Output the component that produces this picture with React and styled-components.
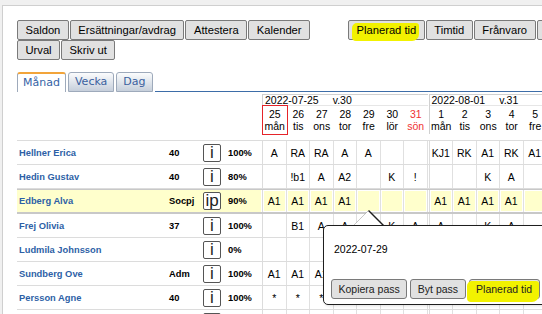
import React from 'react';
import styled, { createGlobalStyle } from 'styled-components';

const GlobalStyle = createGlobalStyle`
  * { box-sizing: border-box; }
  html, body { margin: 0; padding: 0; background: #f0f0f0; overflow: hidden; }
  body { font-family: "Liberation Sans", Arial, sans-serif; color: #000; }
`;

const Frame = styled.div`
  position: relative;
  margin: 5px 0 0 2px;
  width: 640px;
  height: 330px;
  padding: 14px 0 0 14px;
  background: #fff;
  border-top: 1px solid #cfcfcf;
  border-left: 1px solid #cfcfcf;
`;

const ToolRow = styled.div`
  display: flex;
  gap: 1px;
  height: 20px;
  white-space: nowrap;
`;

const RightGroup = styled.div`
  display: flex;
  gap: 1px;
  margin-left: 37px;
`;

const ToolButton = styled.button`
  flex: none;
  height: 20px;
  padding: 0 7.5px;
  border: 1px solid #7a7a7a;
  border-radius: 2px;
  background: #e1e1e1;
  color: #000;
  font-family: "Liberation Sans", Arial, sans-serif;
  font-size: 11.2px;
  line-height: 18px;
  white-space: nowrap;
`;

const Marker = styled.span`
  position: relative;
  z-index: 0;
  &::before {
    content: '';
    position: absolute;
    z-index: -1;
    inset: ${(p) => p.$inset};
    background: #f2f200;
    border-radius: 5px 3px 7px 4px;
  }
`;

const TabBar = styled.div`
  display: flex;
  align-items: flex-end;
  height: 20px;
  margin-top: 12px;
`;

const Tab = styled.div`
  flex: none;
  height: 20px;
  margin-right: 2px;
  padding: 0 ${(p) => (p.$active ? 5 : 6)}px;
  font-family: "DejaVu Sans", Verdana, sans-serif;
  font-size: 11px;
  line-height: 18px;
  color: ${(p) => (p.$active ? '#3563a6' : '#3a5f9e')};
  border: 1px solid #9eaabb;
  border-top: ${(p) => (p.$active ? '2px solid #f2a43a' : '1px solid #9eaabb')};
  border-bottom: ${(p) => (p.$active ? 'none' : '1px solid #9eaabb')};
  border-radius: 3px 3px 0 0;
  background: ${(p) => (p.$active ? '#fff' : 'linear-gradient(#fbfcfd, #c6cfdb)')};
`;

const TabLine = styled.div`
  flex: 1;
  align-self: stretch;
  border-bottom: 1px solid #3d6da8;
`;

const Schedule = styled.div`
  margin-top: 2px;
`;

const HeadRow = styled.div`
  display: flex;
  padding-left: 245px;
`;

const WeekHead = styled.div`
  flex: none;
  margin-left: ${(p) => (p.$second ? 1 : 0)}px;
  border-top: 1px solid #d0d0d0;
  border-left: 1px solid #d0d0d0;
`;

const WeekTitle = styled.div`
  height: 11px;
  padding-left: 2px;
  font-size: 10.5px;
  line-height: 10px;
  white-space: nowrap;
  border-bottom: 1px solid #e6e6e6;
`;

const WeekNo = styled.span`
  margin-left: 14px;
`;

const DaysRow = styled.div`
  display: grid;
  grid-template-columns: repeat(${(p) => p.$n}, 23.5px);
  height: 28px;
`;

const DayHead = styled.div`
  padding-top: 2px;
  text-align: center;
  font-size: 10.5px;
  line-height: 12px;
  color: ${(p) => (p.$red ? '#f03232' : '#000')};
  outline: ${(p) => (p.$today ? '1px solid #e5242a' : 'none')};
`;

const Body = styled.div`
  margin-top: 6px;
  border-top: 1px solid #dcdcdc;
`;

const Row = styled.div`
  display: flex;
  height: ${(p) => (p.$hl ? 25 : 24)}px;
  border-top: ${(p) => (p.$hl ? '1px solid #c8c8c8' : 'none')};
  border-bottom: ${(p) => (p.$hl ? '2px solid #c8c8c8' : '1px solid #dcdcdc')};
`;

const Info = styled.div`
  flex: none;
  display: grid;
  grid-template-columns: 150px 34px 24px 36px;
  align-items: center;
  width: 244px;
  margin-right: 1px;
  background: ${(p) => (p.$hl ? '#ffffcc' : 'transparent')};
`;

const Name = styled.div`
  padding-left: 2px;
  font-size: 9.33px;
  font-weight: bold;
  color: #2d5fa6;
  white-space: nowrap;
  overflow: hidden;
`;

const Bold = styled.div`
  padding-left: ${(p) => p.$pad}px;
  font-size: 9.33px;
  font-weight: bold;
  white-space: nowrap;
`;

const InfoBtn = styled.div`
  width: 18px;
  height: 18px;
  margin-left: 2px;
  border: 1px solid #555;
  border-radius: 2px;
  background: #fff;
  color: #222;
  font-size: 17px;
  line-height: 15px;
  text-align: center;
`;

const CellGroup = styled.div`
  flex: none;
  display: grid;
  grid-template-columns: repeat(${(p) => p.$n}, 23.5px);
  margin-left: ${(p) => (p.$second ? 1 : 0)}px;
  border-left: 1px solid #dcdcdc;
`;

const Cell = styled.div`
  display: flex;
  align-items: center;
  justify-content: center;
  padding: 1px;
  border-right: 1px solid #e0e0e0;
  background: ${(p) => (p.$hl ? '#ffffcc' : '#fff')};
  background-clip: content-box;
  font-size: 10.5px;
  white-space: nowrap;
`;

const Popup = styled.div`
  position: absolute;
  left: 320px;
  top: 219px;
  width: 250px;
  height: 80px;
  padding: 17px 0 0 7px;
  background: #fff;
  border: 1px solid #1e1e1e;
  border-radius: 5px;
  box-shadow: 1px 1px 3px rgba(0, 0, 0, 0.12);
  &::before,
  &::after {
    content: '';
    position: absolute;
    width: 0;
    height: 0;
    border-style: solid;
  }
  &::before {
    left: 30px;
    top: -16px;
    border-width: 0 15px 15px 15px;
    border-color: transparent transparent #1e1e1e transparent;
  }
  &::after {
    left: 30.4px;
    top: -14.6px;
    border-width: 0 14.6px 14.6px 14.6px;
    border-color: transparent transparent #fff transparent;
  }
`;

const PopDate = styled.div`
  margin-left: 3px;
  font-size: 10.5px;
  line-height: 13px;
`;

const PopButtons = styled.div`
  display: flex;
  gap: 3px;
  margin-top: 23px;
  white-space: nowrap;
`;

const PopButton = styled.button`
  flex: none;
  height: 20px;
  padding: 0 6.5px;
  border: 1px solid #7a7a7a;
  border-radius: 3px;
  background: #e1e1e1;
  color: #222;
  font-family: "Liberation Sans", Arial, sans-serif;
  font-size: 10.5px;
  line-height: 18px;
`;

const week1 = [
  ['25', 'mån'], ['26', 'tis'], ['27', 'ons'], ['28', 'tor'], ['29', 'fre'], ['30', 'lör'], ['31', 'sön'],
];
const week2 = [['1', 'mån'], ['2', 'tis'], ['3', 'ons'], ['4', 'tor'], ['5', 'fre']];

const e7 = ['', '', '', '', '', '', ''];
const e5 = ['', '', '', '', ''];

const rows = [
  { name: 'Hellner Erica', hours: '40', info: 'i', pct: '100%', w1: ['A', 'RA', 'RA', 'A', 'A', '', ''], w2: ['KJ1', 'RK', 'A1', 'RK', 'A1'] },
  { name: 'Hedin Gustav', hours: '40', info: 'i', pct: '80%', w1: ['', '!b1', 'A', 'A2', '', 'K', '!'], w2: ['', '', 'K', 'A', ''] },
  { name: 'Edberg Alva', hours: 'Socpj', info: 'ip', pct: '90%', hl: true, w1: ['A1', 'A1', 'A1', 'A1', '', '', ''], w2: ['A1', 'A1', 'A1', 'A1', ''] },
  { name: 'Frej Olivia', hours: '37', info: 'i', pct: '100%', w1: ['', 'B1', 'A', 'A', '', 'K', 'A'], w2: ['A', '', 'K', 'A', ''] },
  { name: 'Ludmila Johnsson', hours: '', info: 'i', pct: '0%', w1: e7, w2: e5 },
  { name: 'Sundberg Ove', hours: 'Adm', info: 'i', pct: '100%', w1: ['A1', 'A1', 'A1', 'A1', 'A1', '', ''], w2: ['A1', 'A1', 'A1', 'A1', 'A1'] },
  { name: 'Persson Agne', hours: '40', info: 'i', pct: '100%', w1: ['*', '*', '*', '*', '*', '', ''], w2: ['*', '*', '*', '*', '*'] },
  { name: 'Lindqvist Maja', hours: '40', info: 'i', pct: '100%', w1: e7, w2: e5 },
];

export default function App() {
  return (
    <>
      <GlobalStyle />
      <Frame>
        <ToolRow>
          <ToolButton>Saldon</ToolButton>
          <ToolButton>Ersättningar/avdrag</ToolButton>
          <ToolButton>Attestera</ToolButton>
          <ToolButton>Kalender</ToolButton>
          <RightGroup>
            <ToolButton>
              <Marker $inset="-1px -3px -5px -5px">Planerad tid</Marker>
            </ToolButton>
            <ToolButton>Timtid</ToolButton>
            <ToolButton>Frånvaro</ToolButton>
            <ToolButton>Rapporter</ToolButton>
          </RightGroup>
        </ToolRow>
        <ToolRow>
          <ToolButton>Urval</ToolButton>
          <ToolButton>Skriv ut</ToolButton>
        </ToolRow>

        <TabBar>
          <Tab $active>Månad</Tab>
          <Tab>Vecka</Tab>
          <Tab>Dag</Tab>
          <TabLine />
        </TabBar>

        <Schedule>
          <HeadRow>
            <WeekHead>
              <WeekTitle>
                2022-07-25<WeekNo>v.30</WeekNo>
              </WeekTitle>
              <DaysRow $n={7}>
                {week1.map(([d, w], i) => (
                  <DayHead key={d} $today={i === 0} $red={i === 6}>
                    {d}
                    <br />
                    {w}
                  </DayHead>
                ))}
              </DaysRow>
            </WeekHead>
            <WeekHead $second>
              <WeekTitle>
                2022-08-01<WeekNo>v.31</WeekNo>
              </WeekTitle>
              <DaysRow $n={5}>
                {week2.map(([d, w]) => (
                  <DayHead key={d}>
                    {d}
                    <br />
                    {w}
                  </DayHead>
                ))}
              </DaysRow>
            </WeekHead>
          </HeadRow>

          <Body>
            {rows.map((r) => (
              <Row key={r.name} $hl={r.hl}>
                <Info $hl={r.hl}>
                  <Name>{r.name}</Name>
                  <Bold $pad={2}>{r.hours}</Bold>
                  <InfoBtn>{r.info}</InfoBtn>
                  <Bold $pad={3}>{r.pct}</Bold>
                </Info>
                <CellGroup $n={7}>
                  {r.w1.map((c, i) => (
                    <Cell key={i} $hl={r.hl}>{c}</Cell>
                  ))}
                </CellGroup>
                <CellGroup $n={5} $second>
                  {r.w2.map((c, i) => (
                    <Cell key={i} $hl={r.hl}>{c}</Cell>
                  ))}
                </CellGroup>
              </Row>
            ))}
          </Body>
        </Schedule>

        <Popup>
          <PopDate>2022-07-29</PopDate>
          <PopButtons>
            <PopButton>Kopiera pass</PopButton>
            <PopButton>Byt pass</PopButton>
            <PopButton>
              <Marker $inset="-2px -7px -7px -9px">Planerad tid</Marker>
            </PopButton>
            <PopButton>Ta bort</PopButton>
          </PopButtons>
        </Popup>
      </Frame>
    </>
  );
}
